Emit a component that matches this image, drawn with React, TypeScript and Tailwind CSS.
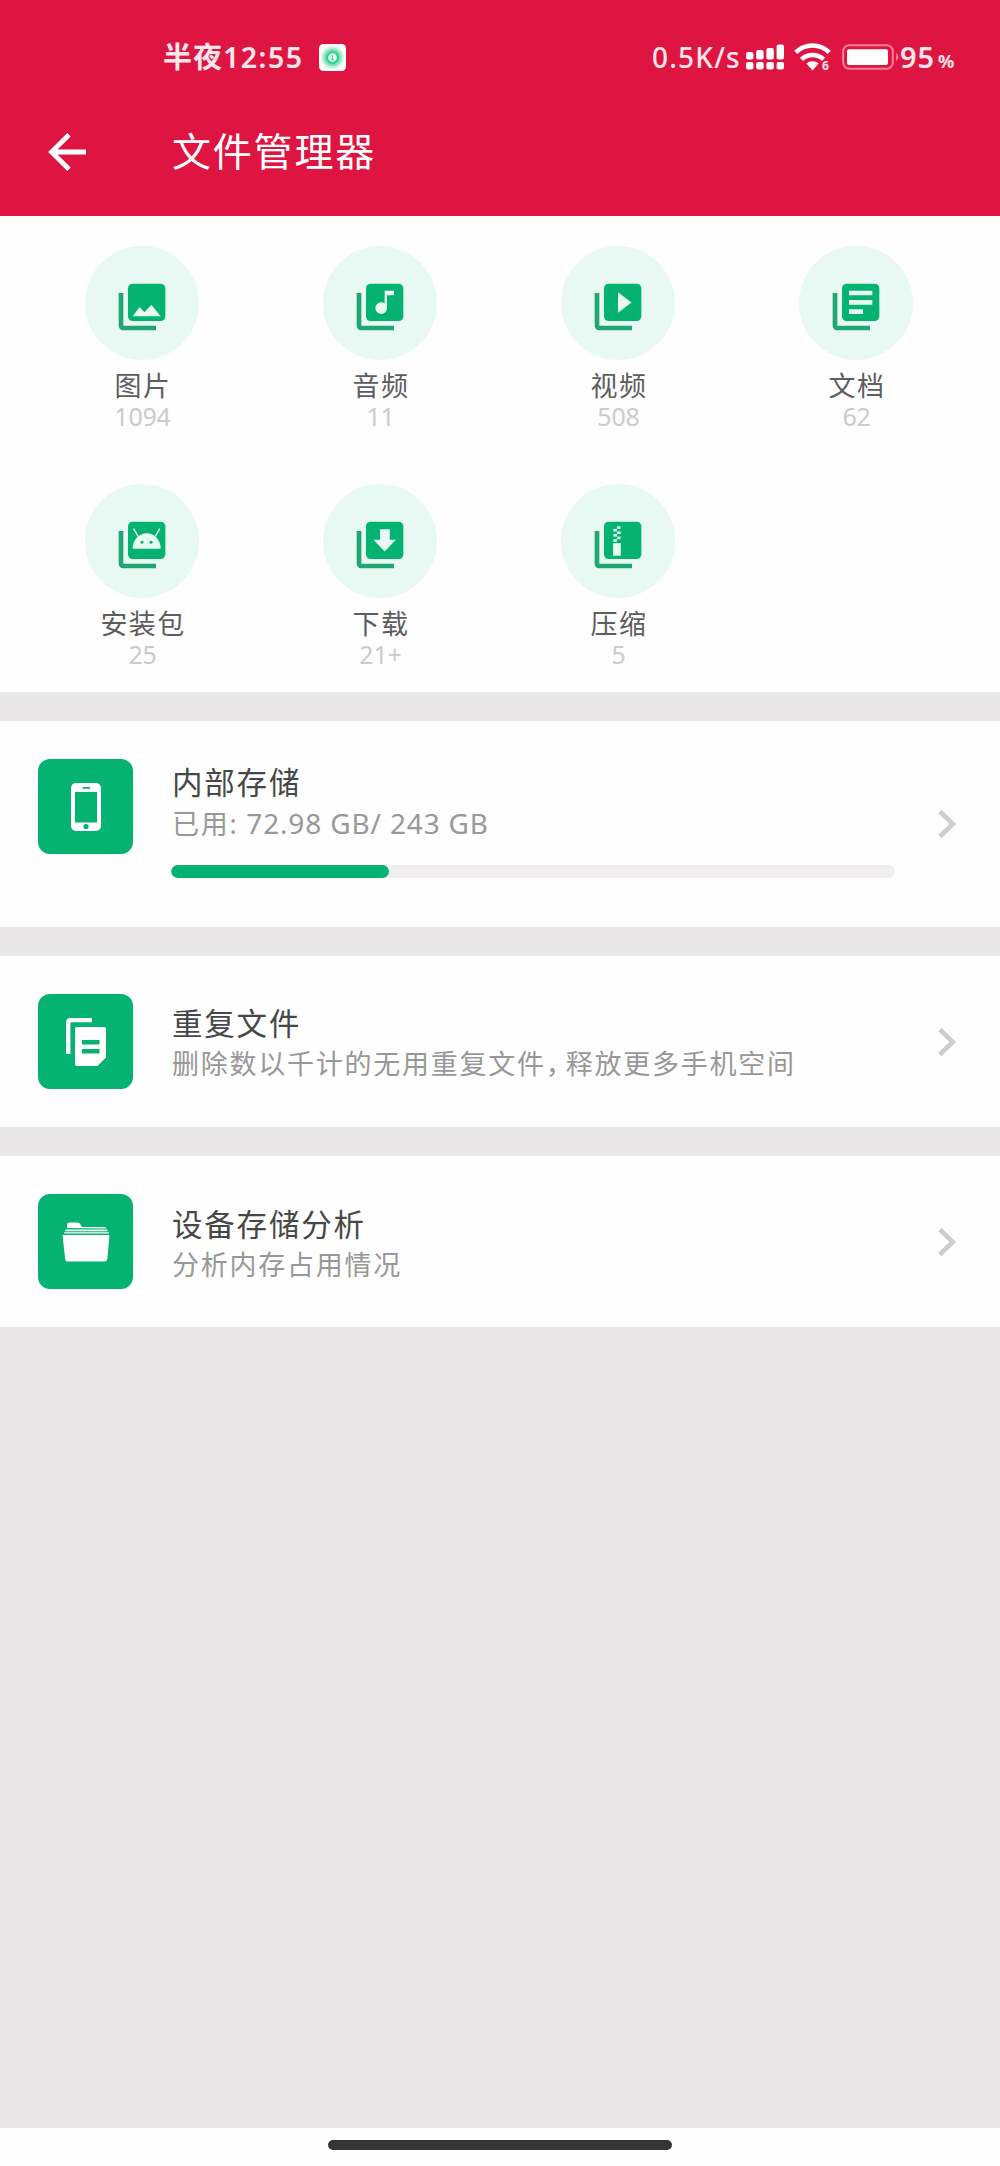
import type { ReactNode } from 'react';

const GREEN = '#04b271';
const FRAME = '#1fa673';
const PALE = '#e8f9f3';

function StackIcon({ children }: { children: ReactNode }) {
  return (
    <svg viewBox="0 0 24 24" className="mt-2 size-14">
      <path d="M2 6h2v14h14v2H4c-1.1 0-2-.9-2-2z" fill={FRAME} />
      <rect x="6" y="2" width="16" height="16" rx="2" fill={GREEN} />
      <g fill={PALE}>{children}</g>
    </svg>
  );
}

const zipTeeth = [
  [11.6, 4], [10, 5.1], [11.6, 6.2], [10, 7.3], [11.6, 8.4], [10, 9.5],
];

const categories: { label: string; count: string; glyph: ReactNode }[] = [
  { label: '图片', count: '1094', glyph: <path d="M8 16l3-4 2 2.3L16 11l4 5z" /> },
  {
    label: '音频',
    count: '11',
    glyph: <path d="M18 7h-3v5.5a2.5 2.5 0 1 1-2.5-2.5c.57 0 1.08.19 1.5.51V5h4z" />,
  },
  { label: '视频', count: '508', glyph: <path d="M12 5.7v8.8l5.8-4.4z" /> },
  { label: '文档', count: '62', glyph: <path d="M9 5h10v2H9zM9 9h10v2H9zM9 13h6v2H9z" /> },
  {
    label: '安装包',
    count: '25',
    glyph: (
      <>
        <path d="M8 13.6a6 6.6 0 0 1 12 0z" />
        <path d="M10.3 8.3L8.4 5M17.7 8.3L19.6 5" stroke={PALE} strokeWidth="0.6" />
        <circle cx="12" cy="10.8" r="0.65" fill={GREEN} />
        <circle cx="15.9" cy="10.8" r="0.65" fill={GREEN} />
      </>
    ),
  },
  { label: '下载', count: '21+', glyph: <path d="M12 5.3h4.2v4.5h2.6L14 14.8 9.2 9.8H12z" /> },
  {
    label: '压缩',
    count: '5',
    glyph: (
      <>
        {zipTeeth.map(([x, y]) => (
          <rect key={y} x={x} y={y} width="1.5" height="1.1" />
        ))}
        <path d="M9.9 11.2h3.3v5.4H9.9z" />
      </>
    ),
  },
];

function StatusBar() {
  return (
    <div className="flex h-[114px] items-center pl-[163px] text-[28px] font-medium text-[#ffe6ec]">
      <span className="flex w-[156px] items-center whitespace-nowrap">
        <span className="text-[29px] font-semibold tracking-[1px]">半夜</span>
        <span className="text-[28.500px] font-semibold tracking-[1.5px]">12:55</span>
      </span>
      <svg viewBox="0 0 27 27" className="size-[27px]">
        <defs>
          <radialGradient id="halo">
            <stop offset="0.5" stopColor="#4ddb9f" />
            <stop offset="1" stopColor="#4ddb9f" stopOpacity="0" />
          </radialGradient>
        </defs>
        <rect width="27" height="27" rx="4.5" fill="#fff" />
        <circle cx="13.5" cy="13.5" r="12" fill="url(#halo)" />
        <circle cx="13.5" cy="13.5" r="6.2" fill="#35cf90" />
        <circle cx="13.5" cy="13.5" r="4.3" fill="#e4fff4" />
        <path d="M13.5 11v4.5M12.2 15.7h2.6" stroke="#52c89a" strokeWidth="1.1" />
      </svg>
      <span className="ml-[306px] w-[94px] whitespace-nowrap tracking-[1.2px]">0.5K/s</span>
      <svg viewBox="0 0 38 26" className="h-[26px] w-[38px]" fill="#fff">
        <rect x="0" y="8" width="7.4" height="7.5" rx="2" />
        <rect x="10.2" y="6" width="7.4" height="9.5" rx="2" />
        <rect x="20.4" y="4" width="7.4" height="11.5" rx="2" />
        <rect x="30.6" y="0.4" width="7.4" height="15.1" rx="2" />
        <rect x="0" y="18" width="7.4" height="7.6" rx="2" />
        <rect x="10.2" y="18" width="7.4" height="7.6" rx="2" />
        <rect x="20.4" y="18" width="7.4" height="7.6" rx="2" />
        <rect x="30.6" y="18" width="7.4" height="7.6" rx="2" />
      </svg>
      <svg viewBox="0 0 38 28" className="ml-2.5 h-7 w-[38px] overflow-visible">
        <path d="M1.7 9.3a24 24 0 0 1 33.6 0" fill="none" stroke="#fff" strokeWidth="4.6" />
        <path d="M7.5 16.4a16 16 0 0 1 22 0" fill="none" stroke="#fff" strokeWidth="4.6" />
        <path d="M12.4 20.6a9 9 0 0 1 12.2 0L18.5 27.5z" fill="#fff" />
        <text x="28" y="27" fontSize="12" fontWeight="700" fill="#ffe6ec">6</text>
      </svg>
      <svg viewBox="0 0 58 26" className="ml-2.5 h-[26px] w-[58px]">
        <rect x="1.2" y="1.2" width="49.6" height="23.6" rx="6" fill="none" stroke="#ff7d97" strokeWidth="2" />
        <rect x="5" y="5.2" width="41" height="15.8" rx="2" fill="#fff" />
        <path d="M54 9c3 1.5 3 6.500 0 8z" fill="#ff7d97" />
      </svg>
      <span className="flex items-baseline">
        <span className="w-[38px] text-[29px] font-semibold tracking-[1px]">95</span>
        <span className="text-[18px] font-bold">%</span>
      </span>
    </div>
  );
}

function Chevron() {
  return (
    <svg viewBox="0 0 20 30" className="mr-[43px] h-[30px] w-5 shrink-0">
      <path d="M2.800 2.500L15.800 15 2.800 27.500" fill="none" stroke="#cdcdcd" strokeWidth="4.6" />
    </svg>
  );
}

function Tile({ children }: { children: ReactNode }) {
  return (
    <span className="flex size-[95px] shrink-0 items-center justify-center rounded-xl bg-[#04b271]">
      {children}
    </span>
  );
}

function RowText({ title, children }: { title: string; children: ReactNode }) {
  return (
    <>
      <h2 className="h-[41px] text-[30.500px] leading-[41px] tracking-[1.8px] text-[#474747]">{title}</h2>
      <p className="h-10 text-[27px] leading-10 tracking-[1.75px] whitespace-nowrap text-[#989898]">{children}</p>
    </>
  );
}

export default function App() {
  const used = 30.1;
  return (
    <div className="flex h-[2166px] w-[1000px] flex-col overflow-hidden bg-[#e9e7e8] font-['Noto_Sans','Noto_Sans_CJK_SC',sans-serif]">
      <header className="h-[216px] shrink-0 bg-[#df1541] text-white">
        <StatusBar />
        <div className="flex h-[76px] items-center pl-12">
          <svg viewBox="0 0 38 38" className="size-[38px]">
            <path d="M38 19H4M21 1.700L3.500 19 21 36.300" fill="none" stroke="#fff" strokeWidth="4.800" />
          </svg>
          <h1 className="mb-0.5 ml-[86px] text-[39px] leading-[60px] tracking-[1.8px]">文件管理器</h1>
        </div>
      </header>

      <section className="grid h-[476px] shrink-0 auto-rows-[238px] grid-cols-[repeat(4,238px)] bg-[#fefefe] pt-[30px] pl-[23px]">
        {categories.map((c) => (
          <div key={c.label} className="flex flex-col items-center">
            <span className="flex size-[114px] items-center justify-center rounded-full bg-[#e8f9f3]">
              <StackIcon>{c.glyph}</StackIcon>
            </span>
            <span className="mt-[9px] h-[34px] pl-[2px] text-[27px] leading-[34px] tracking-[1.4px] text-[#5d5d5d]">{c.label}</span>
            <span className="h-[26px] pl-px text-[25px] leading-[26px] tracking-[-0.2px] text-[#cbcbcb]">{c.count}</span>
          </div>
        ))}
      </section>

      <section className="mt-[29px] flex h-[206px] shrink-0 items-center bg-[#fefefe] pl-[38px]">
        <div className="flex h-full flex-1 pt-[38px]">
          <Tile>
            <svg viewBox="0 0 30 48" className="h-12 w-[30px]">
              <rect width="30" height="48" rx="5" fill="#fff" />
              <path d="M4 9h22v30.500H4zM11.500 4h7.500v1.800h-7.500z" fill={GREEN} />
              <circle cx="15" cy="43.500" r="2.600" fill={GREEN} />
            </svg>
          </Tile>
          <div className="ml-[38px] w-[724px]">
            <div className="pt-[3px] pl-px">
              <RowText title="内部存储">
                已用: <span className="-ml-px text-[28px] tracking-[0.850px]">72.98 GB/ 243 GB</span>
              </RowText>
            </div>
            <div className="mt-[22px] h-[13px] overflow-hidden rounded-full bg-[#f0eeef]">
              <div className="h-full rounded-full bg-[#04b271]" style={{ width: `${used}%` }} />
            </div>
          </div>
        </div>
        <Chevron />
      </section>

      <section className="mt-[29px] flex h-[171px] shrink-0 items-center bg-[#fefefe] pl-[38px]">
        <Tile>
          <svg viewBox="0 0 40 48" className="h-12 w-10">
            <path d="M2.200 36V5q0-3 3-3H26" fill="none" stroke="#fff" strokeWidth="4.400" />
            <path d="M11 9h27q2 0 2 2v28.500L31.500 48H11q-2 0-2-2V11q0-2 2-2z" fill="#fff" />
            <path d="M16 22h17.500v4.400H16zM16 31h17.500v4.400H16z" fill={GREEN} />
          </svg>
        </Tile>
        <div className="ml-[39px] flex-1 pt-1">
          <RowText title="重复文件">
            删除数以千计的无用重复文件<span className="tracking-[-7px]">，</span>释放更多手机空间
          </RowText>
        </div>
        <Chevron />
      </section>

      <section className="mt-[29px] flex h-[171px] shrink-0 items-center bg-[#fefefe] pl-[38px]">
        <Tile>
          <svg viewBox="0 0 48 40" className="h-10 w-12" fill="#fff">
            <path d="M5 6V3q0-2.500 2.500-2.500h8q2 0 3 2l1.500 2.500h22q2 0 2.500 1.500z" />
            <path d="M4 7.600h41l1 1.600H3zM2.500 10.200h44l.7 1.300H1.800z" />
            <path d="M.5 13h47L45.300 37q-.3 2.500-2.800 2.500h-37Q3.500 39.500 3.200 37z" />
          </svg>
        </Tile>
        <div className="ml-[39px] flex-1 pt-[5px]">
          <RowText title="设备存储分析">分析内存占用情况</RowText>
        </div>
        <Chevron />
      </section>

      <footer className="mt-auto flex h-[38px] shrink-0 justify-center bg-[#fefefe] pt-3">
        <div className="h-[9.500px] w-[344px] rounded-full bg-[#353535]" />
      </footer>
    </div>
  );
}
